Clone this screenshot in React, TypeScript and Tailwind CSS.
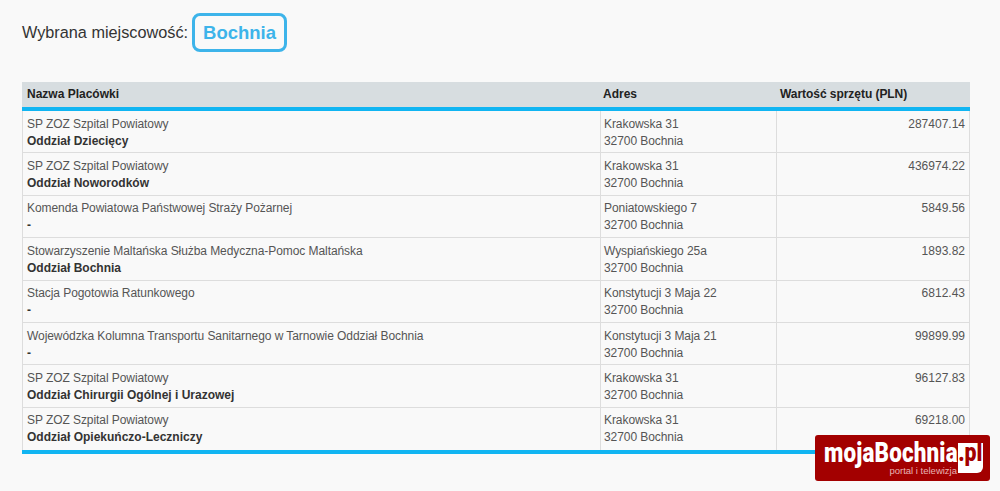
const rows = [
  { name: 'SP ZOZ Szpital Powiatowy', unit: 'Oddział Dziecięcy', street: 'Krakowska 31', value: '287407.14' },
  { name: 'SP ZOZ Szpital Powiatowy', unit: 'Oddział Noworodków', street: 'Krakowska 31', value: '436974.22' },
  { name: 'Komenda Powiatowa Państwowej Straży Pożarnej', unit: '-', street: 'Poniatowskiego 7', value: '5849.56' },
  { name: 'Stowarzyszenie Maltańska Służba Medyczna-Pomoc Maltańska', unit: 'Oddział Bochnia', street: 'Wyspiańskiego 25a', value: '1893.82' },
  { name: 'Stacja Pogotowia Ratunkowego', unit: '-', street: 'Konstytucji 3 Maja 22', value: '6812.43' },
  { name: 'Wojewódzka Kolumna Transportu Sanitarnego w Tarnowie Oddział Bochnia', unit: '-', street: 'Konstytucji 3 Maja 21', value: '99899.99' },
  { name: 'SP ZOZ Szpital Powiatowy', unit: 'Oddział Chirurgii Ogólnej i Urazowej', street: 'Krakowska 31', value: '96127.83' },
  { name: 'SP ZOZ Szpital Powiatowy', unit: 'Oddział Opiekuńczo-Leczniczy', street: 'Krakowska 31', value: '69218.00' },
]

function Logo() {
  return (
    <div className="absolute left-[815px] top-[435px] flex h-[46px] w-[175px] items-start rounded-[3px] bg-[#a30000] pl-[9px] pt-[5px] font-['Roboto',sans-serif]">
      <div className="flex w-[133px] flex-col items-end">
        <span className="w-[133px] origin-left text-[27px] leading-[26px] font-black tracking-[0.2px] whitespace-nowrap text-white [transform:scaleX(0.83)]">
          mojaBochnia
        </span>
        <span className="text-[9.5px] leading-[9px] whitespace-nowrap text-[#e8b4b4] font-['Liberation_Sans',sans-serif]">
          portal i telewizja
        </span>
      </div>
      <div className="ml-[1px] mt-[3px] flex h-[30px] w-[25px] justify-center rounded-br-[6px] bg-white text-[25px] leading-[20px] font-black text-[#a30000]">
        <span className="[transform:scaleX(0.85)]">.pl</span>
      </div>
    </div>
  )
}

export default function App() {
  return (
    <div className="relative h-[491px] w-[1000px] overflow-hidden bg-[#f9f9f9] font-['Liberation_Sans',Arial,sans-serif] text-[#333]">
      <div className="flex flex-col px-[22px] pt-[13px]">
        {/* Selected town */}
        <div className="flex h-[39px] items-center gap-[4px]">
          <span className="text-[16.25px] text-[#333]">Wybrana miejscowość:</span>
          <span className="flex h-[39px] w-[95px] items-center justify-center rounded-[8px] border-[3px] border-[#3db4ea] text-[18.5px] font-bold text-[#3db4ea]">
            Bochnia
          </span>
        </div>

        <table className="mt-[30px] w-[948px] table-fixed border-separate border-spacing-0 border-b-[4px] border-b-[#11b5f2] text-[12px] leading-[17px]">
          <colgroup>
            <col className="w-[578px]" />
            <col className="w-[176px]" />
            <col className="w-[194px]" />
          </colgroup>
          <thead>
            <tr className="h-[29px] bg-[#d7dde0] text-left font-bold text-[#222]">
              <th className="border-b-[4px] border-[#11b5f2] px-[5px]">Nazwa Placówki</th>
              <th className="border-b-[4px] border-[#11b5f2] px-[3px]">Adres</th>
              <th className="border-b-[4px] border-[#11b5f2] px-[4px] tracking-[-0.05px]">Wartość sprzętu (PLN)</th>
            </tr>
          </thead>
          <tbody>
            {rows.map((row, index) => {
              const bottom = index === rows.length - 1 ? '' : 'border-b border-b-[#ddd]'
              return (
                <tr key={index} className="h-[42.4px]">
                  <td className={`border-l border-l-[#ddd] px-[4px] pt-[4.6px] align-top text-[#555] ${bottom}`}>
                    <div className="tracking-[-0.07px]">{row.name}</div>
                    <div className="font-bold text-[#333]">{row.unit}</div>
                  </td>
                  <td className={`border-l border-l-[#ddd] px-[3px] pt-[4.6px] align-top tracking-[-0.07px] text-[#555] ${bottom}`}>
                    <div>{row.street}</div>
                    <div>32700 Bochnia</div>
                  </td>
                  <td className={`border-x border-x-[#ddd] px-[4px] pt-[4.6px] text-right align-top text-[#555] ${bottom}`}>{row.value}</td>
                </tr>
              )
            })}
          </tbody>
        </table>
      </div>

      <Logo />
    </div>
  )
}
